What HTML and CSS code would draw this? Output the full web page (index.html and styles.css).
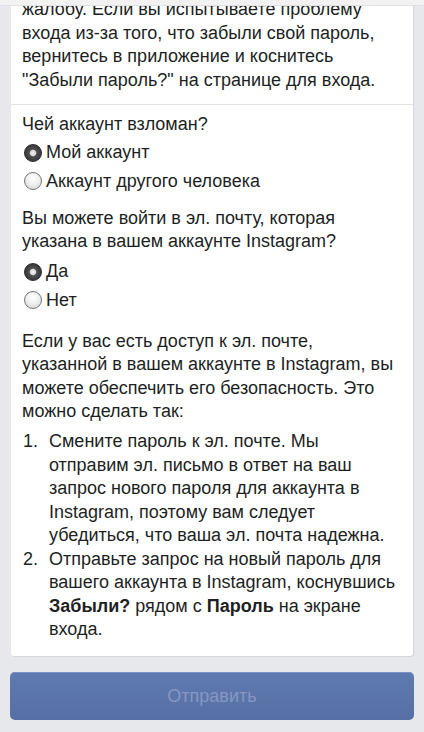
FILE: index.html
```html
<!DOCTYPE html>
<html lang="ru">
<head>
<meta charset="utf-8">
<title>Взлом аккаунта</title>
<link rel="stylesheet" href="styles.css">
</head>
<body>
<div class="topbar"></div>
<main class="page">
  <div class="card">
    <div class="intro">
      <p class="text">жалобу. Если вы испытываете проблему входа из-за того, что забыли свой пароль, вернитесь в приложение и коснитесь "Забыли пароль?" на странице для входа.</p>
    </div>
    <div class="form">
      <p class="text">Чей аккаунт взломан?</p>
      <div class="radios first">
        <label class="radio"><span class="dot checked"></span>Мой аккаунт</label>
        <label class="radio"><span class="dot"></span>Аккаунт другого человека</label>
      </div>
      <p class="text q2">Вы можете войти в эл. почту, которая указана в вашем аккаунте Instagram?</p>
      <div class="radios second">
        <label class="radio"><span class="dot checked"></span>Да</label>
        <label class="radio"><span class="dot"></span>Нет</label>
      </div>
      <p class="text info">Если у вас есть доступ к эл. почте, указанной в вашем аккаунте в Instagram, вы можете обеспечить его безопасность. Это можно сделать так:</p>
      <ol class="steps">
        <li><span class="num">1.</span><span class="step">Смените пароль к эл. почте. Мы отправим эл. письмо в ответ на ваш запрос нового пароля для аккаунта в Instagram, поэтому вам следует убедиться, что ваша эл. почта надежна.</span></li>
        <li><span class="num">2.</span><span class="step">Отправьте запрос на новый пароль для вашего аккаунта в Instagram, коснувшись <b>Забыли?</b> рядом с <b>Пароль</b> на экране входа.</span></li>
      </ol>
    </div>
  </div>
  <button class="submit" type="button">Отправить</button>
</main>
</body>
</html>
```
FILE: styles.css
```css
html, body {
  margin: 0;
  padding: 0;
  background: #e7e8ec;
  height: 100%;
  overflow: hidden;
}
body {
  font-family: "Liberation Sans", Arial, sans-serif;
  font-size: 18px;
  line-height: 23.5px;
  color: #1d1f23;
}
.topbar {
  position: fixed;
  top: 0;
  left: 0;
  right: 0;
  height: 5px;
  background: #f2f2f3;
  border-bottom: 1px solid #e2e2e4;
  z-index: 2;
}
.page {
  padding: 0 10px;
  display: flex;
  flex-direction: column;
}
.card {
  margin: -2px 1px 0 1px;
  background: #fff;
  border-radius: 0 0 3px 3px;
  box-shadow: 1px 1px 1px rgba(0, 0, 0, 0.08);
}
.text {
  margin: 0;
}
.intro {
  padding: 0 11px 12px 11px;
  border-bottom: 1px solid #e3e4e7;
}
.form {
  padding: 8px 10px 14.5px 11px;
}
.radios {
  display: flex;
  flex-direction: column;
}
.radios.first {
  margin-top: 2px;
}
.radios.second {
  margin-top: 4px;
}
.q2 {
  margin-top: 11px;
}
.radio {
  display: flex;
  align-items: center;
  height: 28.5px;
  gap: 4px;
  padding-left: 2px;
}
.dot {
  width: 18px;
  height: 18px;
  box-sizing: border-box;
  border-radius: 50%;
  border: 1px solid #77777a;
  background: radial-gradient(circle at 50% 35%, #ffffff 0%, #f0f0f0 45%, #cfcfd2 100%);
  flex: none;
}
.dot.checked {
  border: 1px solid #2a2a2c;
  background: radial-gradient(circle at 50% 50%, #f4f4f4 0%, #d8d8d8 24%, #505052 33%, #3a3a3c 70%, #2a2a2c 100%);
}
.info {
  margin-top: 15px;
}
.steps {
  list-style: none;
  margin: 6.5px 0 0 0;
  padding: 0;
}
.steps li {
  display: flex;
}
.num {
  width: 26px;
  padding-left: 1px;
  flex: none;
}
.step {
  flex: 1;
}
.step b {
  font-weight: bold;
}
.submit {
  margin-top: 16px;
  height: 48px;
  border: none;
  border-radius: 5px;
  background: linear-gradient(#5f7aae, #5670a6);
  box-shadow: inset 0 1px 0 #7b93c4;
  color: #8797c5;
  font-family: "Liberation Sans", Arial, sans-serif;
  font-size: 18px;
  padding: 0;
}
```
